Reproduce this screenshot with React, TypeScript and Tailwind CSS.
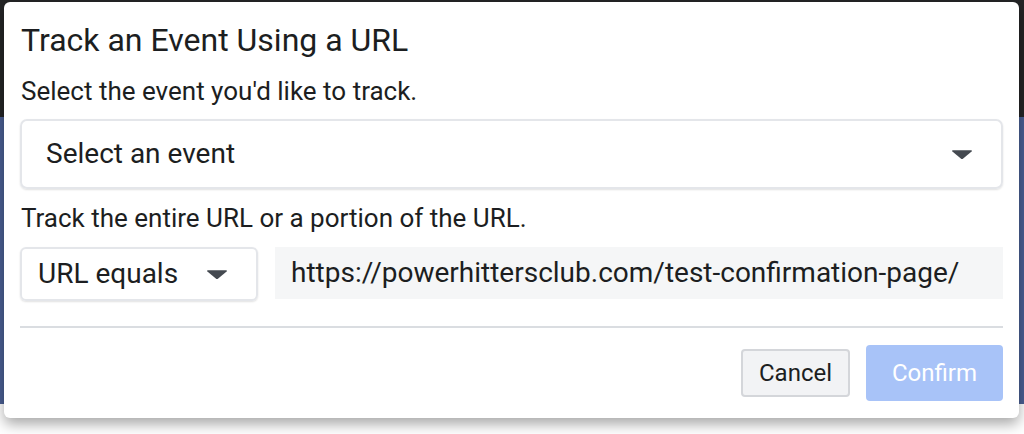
import React from "react";

function Caret({ className }: { className?: string }) {
  return (
    <svg className={className} viewBox="0 0 22 11" width="22" height="11" aria-hidden>
      <path d="M2 1.2 H20 Q21.6 1.2 20.6 2.4 L12.2 9.6 Q11 10.6 9.8 9.6 L1.4 2.4 Q0.4 1.2 2 1.2 Z" fill="#444950" />
    </svg>
  );
}

export default function App() {
  return (
    <div className="relative h-[434px] w-[1024px] overflow-hidden bg-white" style={{ fontFamily: "Roboto, 'Liberation Sans', sans-serif" }}>
      <div className="flex flex-col">
        <div className="h-[117px] bg-[#242526]" />
        <div className="h-[287px] bg-[#4a5f93]" />
      </div>
      <div className="absolute left-[4px] top-[2px] flex h-[416px] w-[1015px] flex-col rounded-[6px] bg-white px-[16px] shadow-[0_6px_14px_rgba(0,0,0,0.35)] text-[#1c1e21]">
        <div className="flex h-[60px] items-end pb-[6px] pl-[1px] text-[32px] leading-none">Track an Event Using a URL</div>
        <div className="flex h-[44px] items-end pb-[2px] pl-[1px] text-[26px] leading-none">Select the event you'd like to track.</div>
        <div className="mt-[13px] flex h-[70px] items-center justify-between rounded-[7px] border-2 border-[#e4e6ea] pl-[24px] pr-[28px] shadow-[0_1px_2px_rgba(0,0,0,0.12)]">
          <span className="text-[28px] leading-none">Select an event</span>
          <Caret />
        </div>
        <div className="flex h-[44px] items-end pb-[2px] pl-[1px] text-[26px] leading-none">Track the entire URL or a portion of the URL.</div>
        <div className="mt-[14px] flex h-[54px] items-start gap-[17px]">
          <div className="flex h-[54px] w-[238px] items-center justify-between rounded-[6px] border-2 border-[#e4e6ea] pl-[16px] pr-[28px] shadow-[0_1px_2px_rgba(0,0,0,0.12)]">
            <span className="text-[28px] leading-none">URL equals</span>
            <Caret />
          </div>
          <div className="flex h-[52px] flex-1 items-center bg-[#f5f6f7] pl-[16px] text-[28px] leading-none">https://powerhittersclub.com/test-confirmation-page/</div>
        </div>
        <div className="mt-[25px] h-[2px] bg-[#dadde1]" />
        <div className="mt-[17px] flex items-center justify-end gap-[16px]">
          <button className="h-[48px] w-[109px] rounded-[4px] border-2 border-[#d4d6da] bg-[#f2f3f5] text-[24px] text-[#1c1e21]">Cancel</button>
          <button className="h-[56px] w-[137px] rounded-[4px] bg-[#a8c3f8] text-[24px] text-white">Confirm</button>
        </div>
      </div>
    </div>
  );
}
